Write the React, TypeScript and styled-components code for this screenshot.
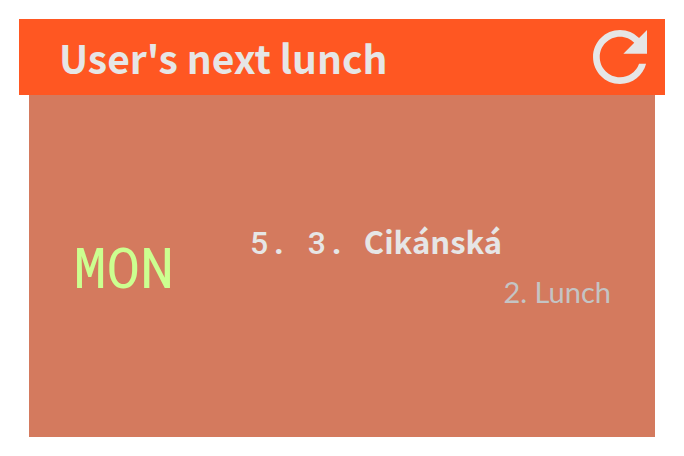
import React from "react";
import styled, { createGlobalStyle } from "styled-components";

const GlobalStyle = createGlobalStyle`
  *, *::before, *::after { box-sizing: border-box; }
  body {
    margin: 0;
    background: #ffffff;
    font-family: "Noto Sans CJK SC", "Noto Sans", sans-serif;
  }
`;

const Widget = styled.main`
  display: flex;
  flex-direction: column;
  min-height: 100vh;
  padding: 19px;
`;

const Header = styled.header`
  display: flex;
  align-items: center;
  justify-content: space-between;
  height: 76px;
  padding: 0 18px 0 40px;
  background: #ff5722;
  color: #e6e6e6;
`;

const Title = styled.h1`
  margin: 0;
  font-size: 39px;
  line-height: 48px;
  font-weight: 700;
`;

const RefreshButton = styled.button`
  display: flex;
  padding: 0;
  border: 0;
  background: none;
  color: inherit;
  cursor: pointer;
`;

const Panel = styled.section`
  flex: 1;
  display: flex;
  align-items: center;
  margin: 0 10px;
  padding: 0 44px;
  gap: 76px;
  background: #d47a5e;
`;

const Day = styled.div`
  color: #ccff90;
  font-family: "Roboto Mono", "DejaVu Sans Mono", monospace;
  font-size: 56px;
  line-height: 64px;
`;

const Entry = styled.div`
  flex: 1;
  display: flex;
  flex-direction: column;
  gap: 2px;
`;

const Meal = styled.div`
  display: flex;
  align-items: baseline;
  gap: 18px;
  color: #e6e6e6;
  font-size: 31px;
  line-height: 48px;
`;

const MealDate = styled.span`
  font-family: "Roboto Mono", "DejaVu Sans Mono", monospace;
  font-size: 32px;
  font-weight: 500;
`;

const MealName = styled.span`
  font-weight: 700;
`;

const Variant = styled.div`
  align-self: flex-end;
  color: #c4c4c4;
  font-family: Lato, "Noto Sans", sans-serif;
  font-size: 29px;
  line-height: 48px;
  font-weight: 400;
`;

const RefreshIcon = () => (
  <svg width="54" height="54" viewBox="4 4 16 16" fill="currentColor" aria-hidden="true">
    <path d="M17.65 6.35A7.958 7.958 0 0 0 12 4c-4.42 0-7.99 3.58-7.99 8s3.57 8 7.99 8c3.73 0 6.84-2.55 7.73-6h-2.08A5.99 5.99 0 0 1 12 18c-3.31 0-6-2.69-6-6s2.69-6 6-6c1.66 0 3.14.69 4.22 1.78L13 11h7V4z" />
  </svg>
);

export default function App() {
  return (
    <>
      <GlobalStyle />
      <Widget>
        <Header>
          <Title>User's next lunch</Title>
          <RefreshButton type="button" aria-label="Refresh">
            <RefreshIcon />
          </RefreshButton>
        </Header>
        <Panel>
          <Day>MON</Day>
          <Entry>
            <Meal>
              <MealDate>5. 3.</MealDate>
              <MealName>Cikánská</MealName>
            </Meal>
            <Variant>2. Lunch</Variant>
          </Entry>
        </Panel>
      </Widget>
    </>
  );
}
